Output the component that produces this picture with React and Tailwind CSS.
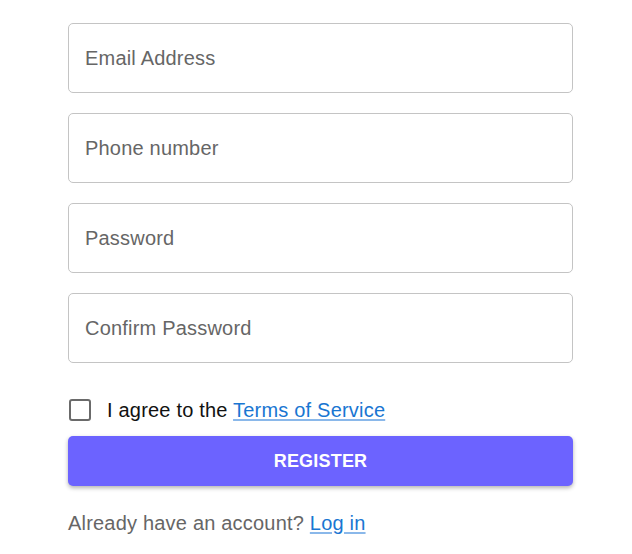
import { useState } from 'react'

const fields = ['Email Address', 'Phone number', 'Password', 'Confirm Password']

export default function App() {
  const [agree, setAgree] = useState(false)

  return (
    <div className="min-h-screen bg-white font-['Liberation_Sans',Arial,sans-serif] tracking-[0.2px]">
      <form className="ml-[68px] w-[505px] pt-[23px]" onSubmit={e => e.preventDefault()}>
        <div className="flex flex-col gap-5">
          {fields.map(f => (
            <input
              key={f}
              type={f.includes('Password') ? 'password' : 'text'}
              placeholder={f}
              className="h-[70px] w-full rounded-[5px] border border-[#c4c4c4] px-4 text-[20px]
                         text-[#333] placeholder:text-[#666] focus:outline-none focus:border-[#6c63ff]"
            />
          ))}
        </div>

        {/* Terms */}
        <label className="mt-[33px] flex h-[28px] items-center cursor-pointer">
          <input
            type="checkbox"
            checked={agree}
            onChange={e => setAgree(e.target.checked)}
            className="peer sr-only"
          />
          <span className="ml-px h-[22px] w-[22px] rounded-[3px] border-[2.5px] border-[#6a6a6a] bg-white" />
          <span className="ml-[16px] text-[20px] text-[#111]">
            I agree to the{' '}
            <a href="#" className="text-[#1976d2] underline decoration-[#8ab8ea] underline-offset-2">
              Terms of Service
            </a>
          </span>
        </label>

        <button
          type="submit"
          className="mt-3 h-[50px] w-full rounded-[5px] bg-[#6c63ff] text-[18px] font-bold text-white
                     shadow-[0_2px_4px_rgba(0,0,0,0.3)]"
        >
          REGISTER
        </button>

        <p className="mt-[23px] text-[20px] leading-[28px] text-[#666]">
          Already have an account?{' '}
          <a href="#" className="text-[#1976d2] underline decoration-[#8ab8ea] underline-offset-2">
            Log in
          </a>
        </p>
      </form>
    </div>
  )
}
